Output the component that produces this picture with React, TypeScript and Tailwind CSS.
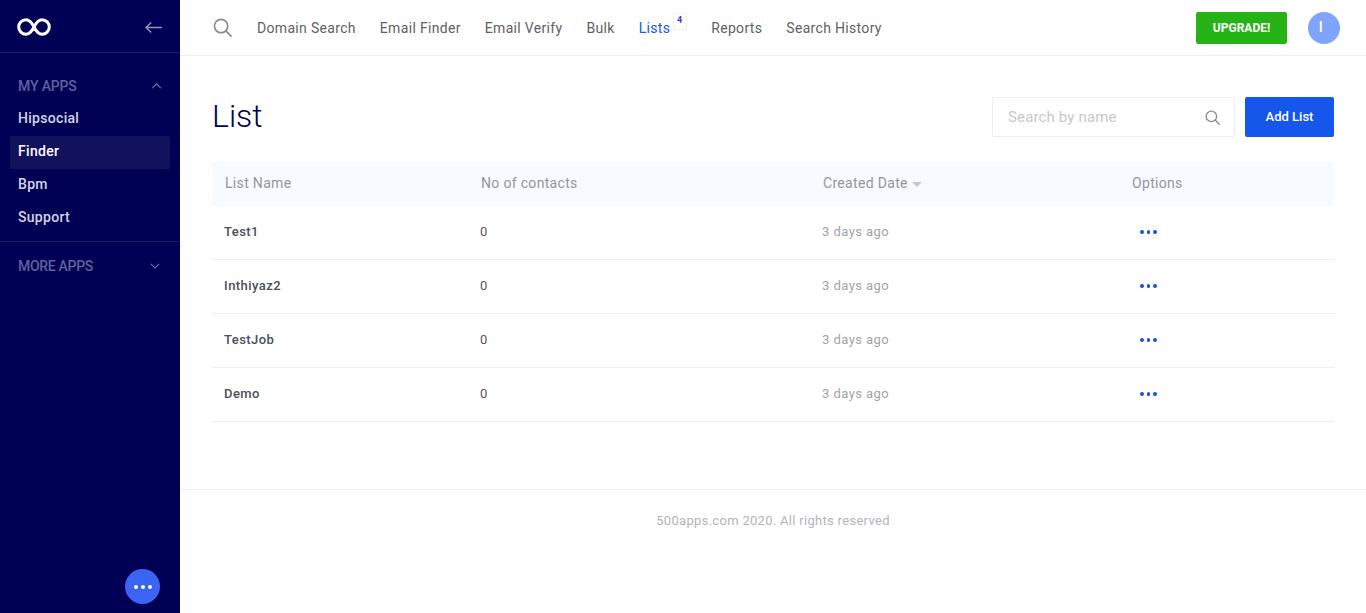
const navItems = ["Domain Search", "Email Finder", "Email Verify", "Bulk"];
const rows = ["Test1", "Inthiyaz2", "TestJob", "Demo"];
const apps = ["Hipsocial", "Finder", "Bpm", "Support"];

function SearchIcon({ className }: { className: string }) {
  return (
    <svg viewBox="0 0 20 20" fill="none" stroke="currentColor" strokeWidth="1.8" strokeLinecap="round" className={className}>
      <circle cx="8.5" cy="8.5" r="7" />
      <path d="M13.8 13.800 19 19" />
    </svg>
  );
}

function Dots({ className, dot }: { className: string; dot: string }) {
  return (
    <div className={className}>
      <span className={dot} />
      <span className={dot} />
      <span className={dot} />
    </div>
  );
}

function Sidebar() {
  return (
    <aside className="w-[180px] h-[613px] shrink-0 bg-[#000055] flex flex-col">
      <div className="h-[53px] border-b border-[#1c1c63] flex items-center justify-between pl-[17px] pr-[17px] shrink-0">
        <svg viewBox="0 0 34 18" fill="none" stroke="white" strokeWidth="3" className="w-[34px] h-[18px] mt-[1px]">
          <path d="M17 9C14.5 4 12.5 1.7 9 1.7a7.3 7.3 0 0 0 0 14.600c3.500 0 5.500-2.300 8-7.300s4.500-7.300 8-7.300a7.300 7.300 0 0 1 0 14.600c-3.500 0-5.500-2.300-8-7.300Z" />
        </svg>
        <svg viewBox="0 0 20 14" fill="none" stroke="#9494bd" strokeWidth="1.5" className="w-[19px] h-[13px] mt-[2px]">
          <path d="M19 7H2M7.500 1.500 2 7l5.500 5.500" />
        </svg>
      </div>
      <div className="flex items-center justify-between pl-[18px] pr-[18px] pt-[17px] h-[49px] shrink-0">
        <span className="text-[14px] font-medium tracking-[-0.15px] text-[#60609c]">MY APPS</span>
        <svg viewBox="0 0 12 7" fill="none" stroke="#7676a8" strokeWidth="1.300" className="w-[11px] h-[6px]">
          <path d="M1 6 6 1l5 5" />
        </svg>
      </div>
      <div className="px-[10px] pt-[1px] pb-[6px] border-b border-[#1c1c63] text-[14px] tracking-[0.3px]">
        {apps.map((app) => (
          <div
            key={app}
            className={
              app === "Finder"
                ? "h-[33px] pl-[8px] pb-[2px] flex items-center text-white font-medium bg-[#12125c] rounded-[2px]"
                : "h-[33px] pl-[8px] pb-[2px] flex items-center text-[#d3d3e6] font-medium"
            }
          >
            {app}
          </div>
        ))}
      </div>
      <div className="flex items-center justify-between pl-[18px] pr-[20px] pt-[12px] h-[36px] shrink-0">
        <span className="text-[14px] font-medium tracking-[-0.3px] text-[#60609c]">MORE APPS</span>
        <svg viewBox="0 0 12 7" fill="none" stroke="#7676a8" strokeWidth="1.300" className="w-[10px] h-[6px]">
          <path d="M1 1l5 5 5-5" />
        </svg>
      </div>
      <div className="mt-auto pb-[9px] pl-[125px]">
        <Dots
          className="w-[35px] h-[35px] rounded-full bg-[#3c64f4] flex items-center justify-center gap-[3px]"
          dot="w-[4px] h-[4px] rounded-full bg-white"
        />
      </div>
    </aside>
  );
}

function Header() {
  return (
    <header className="h-[56px] shrink-0 border-b border-[#eeeeee] flex items-center pl-[33px] pr-[26px] text-[14px] tracking-[0.32px] text-[#5f5f66]">
      <SearchIcon className="w-[19px] h-[19px] text-[#8c8c8c] mr-[25px]" />
      <nav className="flex items-center gap-[24px] pt-[1px]">
        {navItems.map((item) => (
          <a key={item}>{item}</a>
        ))}
        <a className="relative text-[#1557ea] mr-[17px]">
          Lists
          <span className="absolute left-[34px] -top-[5px] w-[14px] h-[17px] border border-[#eeeeee] rounded-[2px] bg-white text-[9px] font-bold tracking-normal text-[#3a3ad0] flex items-center justify-center">
            4
          </span>
        </a>
        <a>Reports</a>
        <a>Search History</a>
      </nav>
      <button className="ml-auto w-[91px] h-[32px] rounded-[2px] bg-[#26b316] text-white text-[12px] font-bold tracking-normal">
        UPGRADE!
      </button>
      <div className="ml-[21px] w-[32px] h-[32px] rounded-full bg-[#80a3fc] text-white text-[14px] font-medium flex items-center justify-center pr-[6px]">
        I
      </div>
    </header>
  );
}

function ListTable() {
  return (
    <div className="text-[13px]">
      <div className="h-[44px] bg-[#f7faff] grid grid-cols-[256px_342px_309px_1fr] items-center text-[14px] text-[#95959d] tracking-[0.32px] pl-[13px] pb-[1px]">
        <span>List Name</span>
        <span>No of contacts</span>
        <span className="flex items-center gap-[4px]">
          Created Date
          <span className="mt-[2px] w-0 h-0 border-x-[5px] border-x-transparent border-t-[5px] border-t-[#c8c8cc]" />
        </span>
        <span>Options</span>
      </div>
      {rows.map((row) => (
        <div
          key={row}
          className="h-[54px] border-b border-[#eeeeee] grid grid-cols-[256px_342px_309px_1fr] items-center pl-[12px] tracking-[0.45px]"
        >
          <span className="font-medium text-[#4a4f5c] pb-[2px]">{row}</span>
          <span className="text-[#55555f] pb-[2px]">0</span>
          <span className="text-[#a3a3ad] pb-[2px]">3 days ago</span>
          <Dots className="pl-[9px] mb-[1px] flex items-center gap-[3px]" dot="w-[3.500px] h-[3.500px] rounded-full bg-[#1c4fe0]" />
        </div>
      ))}
    </div>
  );
}

export default function App() {
  return (
    <div className="flex w-[1366px] h-[613px] overflow-hidden bg-white font-['Roboto',sans-serif]">
      <Sidebar />
      <div className="flex-1 flex flex-col min-w-0">
        <Header />
        <main className="px-[32px] pt-[41px]">
          <div className="flex items-center justify-between h-[40px] mb-[25px]">
            <h1 className="text-[32px] font-light text-[#00004d] pb-[3px]">List</h1>
            <div className="flex items-center gap-[10px]">
              <div className="w-[243px] h-[40px] border border-[#eeeeee] rounded-[2px] flex items-center justify-between pl-[15px] pr-[14px]">
                <span className="text-[15px] tracking-[0.15px] text-[#c8c8cc]">Search by name</span>
                <SearchIcon className="w-[15px] h-[15px] text-[#8c8c8c]" />
              </div>
              <button className="w-[89px] h-[40px] rounded-[2px] bg-[#1557ea] text-white text-[13px] font-medium">
                Add List
              </button>
            </div>
          </div>
          <ListTable />
        </main>
        <footer className="mt-[67px] border-t border-[#eeeeee] pt-[21px] text-center text-[13px] tracking-[0.3px] text-[#b4b4bc]">
          500apps.com 2020. All rights reserved
        </footer>
      </div>
    </div>
  );
}
